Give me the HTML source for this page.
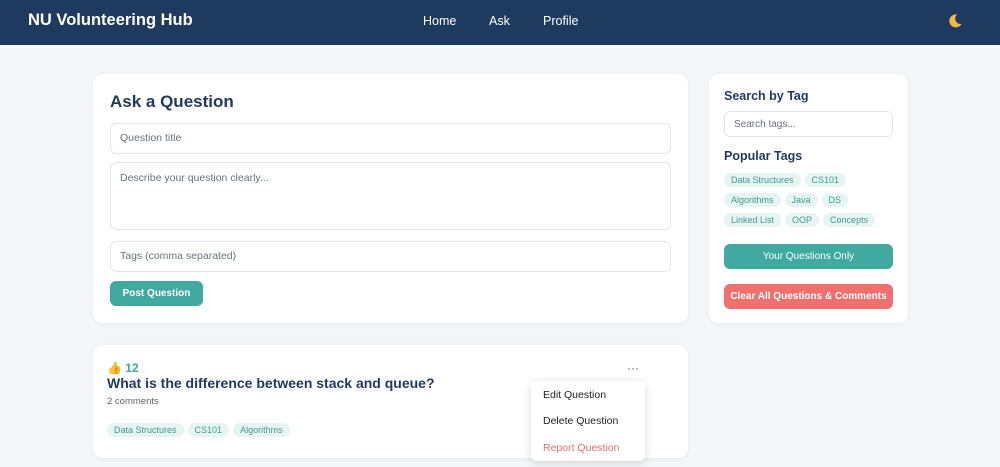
<!DOCTYPE html>
<html><head><style>
*{box-sizing:border-box;margin:0;padding:0}
body{width:1000px;height:467px;overflow:hidden;background:#f4f6fa;font-family:"Liberation Sans",sans-serif;position:relative}
.nav{position:absolute;left:0;top:0;width:1000px;height:45px;background:#1f3a5f;color:#fff}
.brand{position:absolute;left:28px;top:11px;font-size:16.5px;font-weight:bold}
.links{position:absolute;top:14px;font-size:12.5px}
.card{position:absolute;background:#fff;border-radius:10px;box-shadow:0 1px 6px rgba(0,0,0,.06)}
.inp{position:absolute;border:1px solid #e2e6ea;border-radius:6px;font-size:10.5px;color:#6b7280;padding-left:9px}
.tag{display:inline-block;background:#e6f5f2;color:#3f9a8f;font-size:9px;line-height:14px;height:14px;padding:0 7px;border-radius:7px;margin-right:4px;vertical-align:top}
.btn{position:absolute;border-radius:6px;color:#fff;font-size:10px;font-weight:bold;text-align:center}
h2{position:absolute;color:#1f3a5f;font-size:12.5px}
</style></head><body>
<div class="nav"><div class="brand">NU Volunteering Hub</div>
<div class="links" style="left:423px">Home</div><div class="links" style="left:489px">Ask</div><div class="links" style="left:543px">Profile</div>
<svg style="position:absolute;left:947px;top:13px" width="16" height="16" viewBox="0 0 16 16"><path d="M10 1.5A6.5 6.5 0 1 0 14.5 11 5.5 5.5 0 0 1 10 1.5z" fill="#f5b942"/></svg></div>

<div class="card" style="left:93px;top:74px;width:595px;height:249px">
<div style="position:absolute;left:17px;top:18px;font-size:17px;font-weight:bold;color:#1f3a5f">Ask a Question</div>
<div class="inp" style="left:17px;top:49px;width:561px;height:31px;line-height:29px">Question title</div>
<div class="inp" style="left:17px;top:88px;width:561px;height:68px;padding-top:9px">Describe your question clearly...</div>
<div class="inp" style="left:17px;top:167px;width:561px;height:31px;line-height:29px">Tags (comma separated)</div>
<div class="btn" style="left:17px;top:207px;width:93px;height:25px;line-height:25px;background:#40a9a0">Post Question</div>
</div>

<div class="card" style="left:93px;top:345px;width:595px;height:113px">
<div style="position:absolute;left:14px;top:16px;font-size:12px;color:#40a9a0;font-weight:bold"><span style="color:#f0a030">👍</span> 12</div>
<div style="position:absolute;left:14px;top:30px;font-size:14px;font-weight:bold;color:#1f3a5f">What is the difference between stack and queue?</div>
<div style="position:absolute;left:14px;top:51px;font-size:9.5px;color:#666">2 comments</div>
<div style="position:absolute;left:14px;top:78px"><span class="tag">Data Structures</span><span class="tag">CS101</span><span class="tag">Algorithms</span></div>
<div style="position:absolute;left:534px;top:16px;font-size:12px;color:#555">···</div>
</div>
<div class="card" style="left:531px;top:381px;width:114px;height:80px;border-radius:6px;box-shadow:0 2px 10px rgba(0,0,0,.15);font-size:10.5px">
<div style="position:absolute;left:12px;top:8px;color:#222">Edit Question</div>
<div style="position:absolute;left:12px;top:34px;color:#222">Delete Question</div>
<div style="position:absolute;left:12px;top:61px;color:#e87070">Report Question</div>
</div>

<div class="card" style="left:709px;top:74px;width:199px;height:249px">
<h2 style="left:15px;top:15px">Search by Tag</h2>
<div class="inp" style="left:15px;top:37px;width:169px;height:26px;line-height:25px;font-size:10px">Search tags...</div>
<h2 style="left:15px;top:75px">Popular Tags</h2>
<div style="position:absolute;left:15px;top:99px;width:180px;line-height:14px"><div style="height:20px"><span class="tag">Data Structures</span><span class="tag">CS101</span></div><div style="height:20px"><span class="tag">Algorithms</span><span class="tag">Java</span><span class="tag">DS</span></div><div style="height:20px"><span class="tag">Linked List</span><span class="tag">OOP</span><span class="tag">Concepts</span></div></div>
<div class="btn" style="left:15px;top:170px;width:169px;height:25px;line-height:25px;background:#40a9a0;font-weight:normal">Your Questions Only</div>
<div class="btn" style="left:15px;top:210px;width:169px;height:25px;line-height:25px;background:#f07070">Clear All Questions &amp; Comments</div>
</div>
</body></html>
